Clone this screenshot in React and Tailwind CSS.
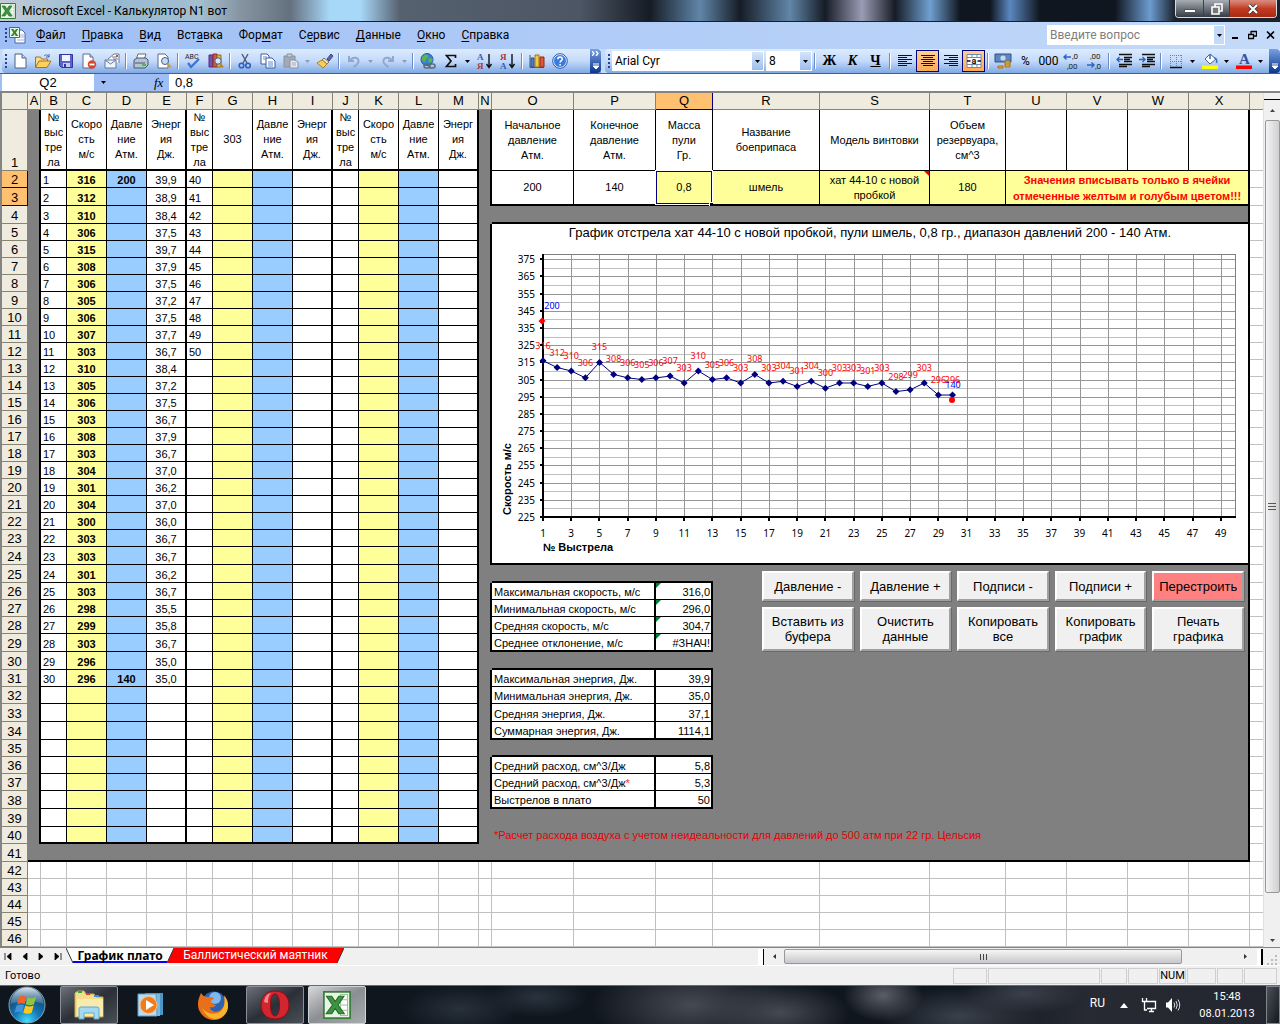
import { Fragment } from 'react';

/* ── Sheet data ── */
const COLUMNS = [
  ['A', 'w-[13px]'], ['B', 'w-[26px]'], ['C', 'w-[40px]'], ['D', 'w-[40px]'], ['E', 'w-[40px]'],
  ['F', 'w-[26px]'], ['G', 'w-[40px]'], ['H', 'w-[40px]'], ['I', 'w-[40px]'], ['J', 'w-[26px]'],
  ['K', 'w-[40px]'], ['L', 'w-[40px]'], ['M', 'w-[40px]'], ['N', 'w-[13px]'], ['O', 'w-[82px]'],
  ['P', 'w-[82px]'], ['Q', 'w-[57px]'], ['R', 'w-[107px]'], ['S', 'w-[110px]'], ['T', 'w-[76px]'],
  ['U', 'w-[61px]'], ['V', 'w-[61px]'], ['W', 'w-[61px]'], ['X', 'w-[61px]'],
];

const SPEEDS = [
  316, 312, 310, 306, 315, 308, 306, 305, 306, 307, 303, 310, 305, 306, 303,
  308, 303, 304, 301, 304, 300, 303, 303, 301, 303, 298, 299, 303, 296, 296,
];

const ENERGIES = [
  '39,9', '38,9', '38,4', '37,5', '39,7', '37,9', '37,5', '37,2', '37,5', '37,7',
  '36,7', '38,4', '37,2', '37,5', '36,7', '37,9', '36,7', '37,0', '36,2', '37,0',
  '36,0', '36,7', '36,7', '36,2', '36,7', '35,5', '35,8', '36,7', '35,0', '35,0',
];

const TALL_ROWS = [3, 4, 24, 25, 29, 30, 33, 34, 38, 39, 41];
const ROWS = Array.from({ length: 46 }, (_, i) => i + 1);

const LEFT_HEADERS = [
  ['№', 'выс', 'тре', 'ла'], ['Скоро', 'сть', 'м/с'], ['Давле', 'ние', 'Атм.'], ['Энерг', 'ия', 'Дж.'],
  ['№', 'выс', 'тре', 'ла'], ['303'], ['Давле', 'ние', 'Атм.'], ['Энерг', 'ия', 'Дж.'],
  ['№', 'выс', 'тре', 'ла'], ['Скоро', 'сть', 'м/с'], ['Давле', 'ние', 'Атм.'], ['Энерг', 'ия', 'Дж.'],
];

const RIGHT_HEADERS = [
  ['Начальное', 'давление', 'Атм.'], ['Конечное', 'давление', 'Атм.'], ['Масса', 'пули', 'Гр.'],
  ['Название', 'боеприпаса'], ['Модель винтовки'], ['Объем', 'резервуара,', 'см^3'], [], [], [], [],
];

const SUMMARY = {
  26: ['Максимальная скорость, м/с', '316,0'],
  27: ['Минимальная скорость, м/с', '296,0'],
  28: ['Средняя скорость, м/с', '304,7'],
  29: ['Среднее отклонение, м/с', '#ЗНАЧ!'],
  31: ['Максимальная энергия, Дж.', '39,9'],
  32: ['Минимальная энергия, Дж.', '35,0'],
  33: ['Средняя энергия, Дж.', '37,1'],
  34: ['Суммарная энергия, Дж.', '1114,1'],
  36: ['Средний расход, см^3/Дж', '5,8'],
  37: ['Средний расход, см^3/Дж', '5,3'],
  38: ['Выстрелов в плато', '50'],
};

const MENU = [
  ['', 'Ф', 'айл'], ['', 'П', 'равка'], ['', 'В', 'ид'], ['Вст', 'а', 'вка'], ['Фор', 'м', 'ат'],
  ['С', 'е', 'рвис'], ['', 'Д', 'анные'], ['', 'О', 'кно'], ['', 'С', 'правка'],
];

/* ── Toolbar icons ── */
const ICONS = {
  new: <><path d="M3 1h7l4 4v10H3z" fill="#fff" stroke="#4d6185" /><path d="M10 1v4h4" fill="#c9d8f0" stroke="#4d6185" /></>,
  open: <><path d="M0.500 14V4h5l1 2h6v3" fill="#fbdc85" stroke="#a0752a" /><path d="M0.500 14.500L4 8h12l-4 6.500z" fill="#ffcf5c" stroke="#a0752a" /><path d="M9 3c2-2 4-1 5 1m0-3v3h-3" fill="none" stroke="#3f66a8" /></>,
  save: <><path d="M1.500 1.500h13v13h-11l-2-2z" fill="#5c63c8" stroke="#31379a" /><path d="M4 2h8v6H4z" fill="#f0f3ff" /><path d="M5 10h7v4H5z" fill="#c7cdf1" /><path d="M6 11h2v3H6z" fill="#31379a" /></>,
  permission: <><path d="M2 1h7l3 3v11H2z" fill="#fff" stroke="#5b6d8e" /><path d="M9 1v3h3" fill="#c9d8f0" stroke="#5b6d8e" /><circle cx="11" cy="11.500" r="4.200" fill="#d9452b" /><path d="M8.500 11.500h5" stroke="#fff" strokeWidth="1.800" /></>,
  mail: <><path d="M4 6l6-5h5v9" fill="#fff" stroke="#66799a" /><path d="M1 7h11v8H1z" fill="#eef2fa" stroke="#66799a" /><path d="M1 7l5.500 4L12 7M8 4h5M9 6h5" fill="none" stroke="#66799a" /><path d="M12 2h2v2h-2z" fill="#cf513b" /></>,
  print: <><path d="M5 1h8l-2 6H3z" fill="#fff" stroke="#5e6f86" /><path d="M1 7l3-2h9l2 2v5l-3 3H1z" fill="#b6c3d4" stroke="#4b596e" /><path d="M2 10h10" stroke="#4b596e" /><path d="M9 11h4v2H9z" fill="#42c243" /></>,
  preview: <><path d="M2 1h7l3 3v11H2z" fill="#fff" stroke="#5b6d8e" /><circle cx="9" cy="8" r="3.500" fill="#bfe0f5" stroke="#4b5f85" /><path d="M11.500 10.500L15 14.500" stroke="#d2a03c" strokeWidth="2.200" /></>,
  spell: <><text x="0" y="6" fontSize="7" fill="#222">ABC</text><path d="M3 10l3 4 8-8" fill="none" stroke="#3b72d6" strokeWidth="2.200" /></>,
  research: <><path d="M1 2h4v12H1z" fill="#7a4fb0" stroke="#4a3080" /><path d="M5 1h4v13H5z" fill="#d0584a" stroke="#8a2f22" /><path d="M9 2h4v12H9z" fill="#e6b74a" stroke="#8f6c1f" /><circle cx="10" cy="8" r="3.200" fill="#d5eafa" stroke="#48597a" /><path d="M12 10.500l3 4" stroke="#b98623" strokeWidth="2" /></>,
  cut: <><path d="M5 1l5 9M11 1L6 10" stroke="#50607c" strokeWidth="1.500" /><circle cx="4.500" cy="12.500" r="2.300" fill="none" stroke="#2d5fc0" strokeWidth="1.600" /><circle cx="11" cy="12.500" r="2.300" fill="none" stroke="#2d5fc0" strokeWidth="1.600" /></>,
  copy: <><path d="M1 1h6l2 2v8H1z" fill="#fff" stroke="#3a5f9e" /><path d="M6 5h6l3 3v7H6z" fill="#fff" stroke="#3a5f9e" /><path d="M3 4h4M3 6h3M8 9h5M8 11h5M8 13h5" stroke="#5f8bd0" /></>,
  paste: <><path d="M1 3h11v11H1z" fill="#a4abb8" stroke="#8890a0" /><path d="M4 1h5v3H4z" fill="#c9ced8" stroke="#8890a0" /><path d="M7 7h5l3 2v6H7z" fill="#e4e8f0" stroke="#8890a0" /><path d="M9 10h4M9 12h4" stroke="#a4abb8" /></>,
  brush: <><path d="M10 6l4-5 2 2-4 5z" fill="#5a68b4" stroke="#3b478a" /><path d="M7 5l5 4-2 2-5-4z" fill="#e0e0e0" stroke="#8a7a40" /><path d="M5 7l5 4-4 4L0 10z" fill="#f5cf5a" stroke="#a98421" /></>,
  undo: <path d="M3 3v5h5M3.500 8c3-5 10-4 9 1-1 3-3 4-5 5" fill="none" stroke="#92a7cf" strokeWidth="2" />,
  redo: <path d="M13 3v5H8M12.500 8c-3-5-10-4-9 1 1 3 3 4 5 5" fill="none" stroke="#92a7cf" strokeWidth="2" />,
  link: <><circle cx="7" cy="6.500" r="6" fill="#3b83d8" stroke="#24599c" /><path d="M3 3c3-3 6-1 5 1S5 6 5 9c-3 0-4-4-2-6zM9 5l4 1-2 4-3-2z" fill="#5cb648" /><rect x="4" y="11" width="6" height="4" rx="2" fill="none" stroke="#5a6b7c" strokeWidth="1.500" /><rect x="9" y="11" width="6" height="4" rx="2" fill="none" stroke="#5a6b7c" strokeWidth="1.500" /></>,
  sum: <path d="M12.500 5V2.500h-9L8 8l-4.500 5.500h9V11" fill="none" stroke="#111" strokeWidth="1.700" />,
  sortAsc: <><path d="M12 1v13M9.500 11l2.500 3.500 2.500-3.500" fill="none" stroke="#111" strokeWidth="1.400" /><text x="0" y="7" fontSize="9" fontWeight="700" fill="#3a5fa8" fontFamily="Liberation Serif">А</text><text x="0" y="16" fontSize="9" fontWeight="700" fill="#a83a3a" fontFamily="Liberation Serif">Я</text></>,
  sortDesc: <><path d="M12 1v13M9.500 11l2.500 3.500 2.500-3.500" fill="none" stroke="#111" strokeWidth="1.400" /><text x="0" y="7" fontSize="9" fontWeight="700" fill="#a83a3a" fontFamily="Liberation Serif">Я</text><text x="0" y="16" fontSize="9" fontWeight="700" fill="#3a5fa8" fontFamily="Liberation Serif">А</text></>,
  chart: <><path d="M1 2v12.500h14" fill="none" stroke="#555" /><path d="M2 5h3v9H2z" fill="#4c7fd6" stroke="#284f96" /><path d="M6 2h4v12H6z" fill="#f4c83f" stroke="#9a761a" /><path d="M11 4h4v10h-4z" fill="#e0563a" stroke="#8f2a16" /></>,
  help: <><circle cx="8" cy="8" r="6.500" fill="#3a7be0" stroke="#fff" /><circle cx="8" cy="8" r="7.300" fill="none" stroke="#2a5cb0" /><path d="M5.800 6.300c0-3 4.500-3 4.500-.3 0 1.600-2.200 1.500-2.200 3.500M8.100 11v1.600" fill="none" stroke="#fff" strokeWidth="1.600" /></>,
  left: <path d="M1 2.500h14M1 4.500h9M1 6.500h14M1 8.500h9M1 10.500h14M1 12.500h9" stroke="#111" />,
  center: <path d="M1 2.500h14M3 4.500h10M1 6.500h14M3 8.500h10M1 10.500h14M3 12.500h10" stroke="#111" />,
  right: <path d="M1 2.500h14M6 4.500h9M1 6.500h14M6 8.500h9M1 10.500h14M6 12.500h9" stroke="#111" />,
  merge: <><path d="M1 1.500h14v13H1zM1 4.500h14M1 11.500h14M6 1.500v3M11 1.500v3M6 11.500v3M11 11.500v3" fill="#fff" stroke="#7288b0" /><text x="5.500" y="10.500" fontSize="9" fontWeight="700" fill="#111">a</text><path d="M1 8h3.500M15 8h-3.500" stroke="#111" strokeWidth="1.400" /></>,
  currency: <><path d="M0 1h16v8H0z" fill="#5d86bd" stroke="#2f5288" /><circle cx="8" cy="5" r="2.600" fill="#c4d8f0" /><path d="M3 13h5v2H3z" fill="#f0b43c" stroke="#a86e14" /><path d="M10 8h5v6h-5zM10 10h5M10 12h5" fill="#f6c650" stroke="#a86e14" /></>,
  incDec: <><text x="8" y="6" fontSize="8" fill="#222">,0</text><text x="3" y="16" fontSize="8" fill="#222">,00</text><path d="M7 4H0m2.500-2.500L0 4l2.500 2.500" fill="none" stroke="#2d62c4" strokeWidth="1.400" /></>,
  decDec: <><text x="3" y="6" fontSize="8" fill="#222">,00</text><text x="8" y="16" fontSize="8" fill="#222">,0</text><path d="M0 12h7M4.500 9.500L7 12l-2.500 2.500" fill="none" stroke="#2d62c4" strokeWidth="1.400" /></>,
  outdent: <><path d="M3 1.500h13M8 4.500h8M8 6.500h6M8 8.500h8M3 11.500h13M3 13.500h8" stroke="#111" strokeWidth="1.300" /><path d="M7 6.500H1m2.500-2.500L1 6.500 3.500 9" fill="none" stroke="#2d62c4" strokeWidth="1.400" /></>,
  indent: <><path d="M3 1.500h13M8 4.500h8M8 6.500h6M8 8.500h8M3 11.500h13M3 13.500h8" stroke="#111" strokeWidth="1.300" /><path d="M0 6.500h6M3.500 4L6 6.500 3.500 9" fill="none" stroke="#2d62c4" strokeWidth="1.400" /></>,
  borders: <><path d="M2 2.500h12M2 8.500h12M2.500 2v12M8.500 2v12M13.500 2v12" stroke="#6f7f9f" strokeDasharray="1 1" /><path d="M2 14.500h12" stroke="#111" strokeWidth="1.500" /></>,
  fill: <><path d="M0 12.500h16V16H0z" fill="#ff0" /><path d="M3 6l5-5 6 5-6 5z" fill="#fff" stroke="#4a5f88" /><path d="M8 1V6M12 5c3 0 3 3 2.500 5" fill="none" stroke="#3c70c0" strokeWidth="1.600" /></>,
  font: <><path d="M0 12.500h16V16H0z" fill="#f00" /><text x="3" y="11" fontSize="15" fontWeight="700" fill="#35549a" fontFamily="Liberation Serif">A</text></>,
};

const STANDARD_BAR = [
  ['new', 'Создать'], ['open', 'Открыть'], ['save', 'Сохранить'], ['permission', 'Разрешения'], ['mail', 'Сообщение'], '|',
  ['print', 'Печать'], ['preview', 'Предварительный просмотр'], '|',
  ['spell', 'Орфография'], ['research', 'Справочные материалы'], '|',
  ['cut', 'Вырезать'], ['copy', 'Копировать'], ['paste', 'Вставить', 'menu-off'], ['brush', 'Формат по образцу'], '|',
  ['undo', 'Отменить', 'menu-off'], ['redo', 'Вернуть', 'menu-off'], '|',
  ['link', 'Гиперссылка'], ['sum', 'Автосумма', 'menu'], ['sortAsc', 'По возрастанию'], ['sortDesc', 'По убыванию'], '|',
  ['chart', 'Мастер диаграмм'], ['help', 'Справка'],
];

const FORMAT_BAR = [
  ['left', 'По левому краю'], ['center', 'По центру', 'on'], ['right', 'По правому краю'], ['merge', 'Объединить', 'on'], '|',
  ['currency', 'Денежный формат'], ['%', 'Процентный формат'], ['000', 'Формат с разделителями'],
  ['incDec', 'Увеличить разрядность'], ['decDec', 'Уменьшить разрядность'], '|',
  ['outdent', 'Уменьшить отступ'], ['indent', 'Увеличить отступ'], '|',
  ['borders', 'Границы', 'menu'], ['fill', 'Цвет заливки', 'menu'], ['font', 'Цвет шрифта', 'menu'],
];

function ExcelIcon({ className }) {
  return (
    <svg viewBox="0 0 16 16" className={className}>
      <path d="M.5.5h15v15H.5z" fill="#e9f3e6" stroke="#3b7d3c" />
      <path d="M10 2h4v12h-4z" fill="#fff" stroke="#9cc49a" strokeWidth=".6" />
      <path d="M10 5h4M10 8h4M10 11h4" stroke="#9cc49a" strokeWidth=".6" />
      <path d="M2 3h3l2 3 2-3h3L8.600 8l3.600 5H9L7 10l-2 3H1.800l3.600-5z" fill="#3d9440" stroke="#226b27" strokeWidth=".6" />
    </svg>
  );
}

function WorkbookIcon() {
  return (
    <svg viewBox="0 0 17 17" className="ml-px h-[17px] w-[17px] shrink-0">
      <path d="M6 3h7l3 3v10H6z" fill="#fff" stroke="#4a66a8" />
      <path d="M11 8h4M11 10h4M8 13h7" stroke="#9cb2dc" />
      <path d="M.5.5h10v10H.5z" fill="#e9f3e6" stroke="#3b7d3c" />
      <path d="M2 2h2.500l1.200 2L7 2h2.300L6.900 5.500 9.300 9H6.800L5.500 7 4.200 9H1.800l2.500-3.500z" fill="#2f8a33" />
    </svg>
  );
}

function Caret({ className = 'text-black' }) {
  return (
    <svg viewBox="0 0 5 3" className={`h-[3px] w-[5px] shrink-0 ${className}`}>
      <path d="M0 0h5L2.500 3z" fill="currentColor" />
    </svg>
  );
}

function Grip() {
  return (
    <svg viewBox="0 0 3 15" className="h-[15px] w-[3px] shrink-0">
      <path d="M0 0h2v2H0zM0 4h2v2H0zM0 8h2v2H0zM0 12h2v2H0z" fill="#27418c" />
    </svg>
  );
}

function ToolButton({ item }) {
  if (item === '|') {
    return (
      <span className="flex w-[6px] shrink-0 justify-center">
        <span className="h-4 border-l border-r border-l-[#6a8ccb] border-r-white" />
      </span>
    );
  }
  const [name, label, mode] = item;
  return (
    <>
      <button
        type="button"
        aria-label={label}
        className={`flex h-[22px] w-[23px] shrink-0 items-center justify-center text-xs ${mode === 'on' ? 'border border-[#000080] bg-gradient-to-b from-[#ffd08f] to-[#fdab55]' : ''}`}
      >
        {ICONS[name] ? <svg viewBox="0 0 16 16" className="h-4 w-4 overflow-visible">{ICONS[name]}</svg> : name}
      </button>
      {mode && mode.startsWith('menu') && (
        <button type="button" aria-label={`${label}: список`} className="flex h-[22px] w-[11px] shrink-0 items-center justify-center">
          <Caret className={mode === 'menu' ? 'text-black' : 'text-[#8d9bb8]'} />
        </button>
      )}
    </>
  );
}

function Overflow({ more }) {
  return (
    <button type="button" aria-label="Параметры панелей" className="flex h-full w-[11px] shrink-0 flex-col items-center justify-end gap-[7px] rounded-r-sm bg-gradient-to-b from-[#7aa0e0] to-[#0a3690] pb-1">
      {more && <svg viewBox="0 0 7 5" className="h-[5px] w-[7px]"><path d="M0 0l2 2.500L0 5M4 0l2 2.500L4 5" fill="none" stroke="#fff" strokeWidth="1.400" /></svg>}
      <svg viewBox="0 0 7 6" className="h-[6px] w-[7px]"><path d="M1 1h6M1 3h6L4 6z" stroke="#fff" fill="#fff" /></svg>
    </button>
  );
}

function TitleBar() {
  return (
    <header className="flex h-[22px] items-start border-b border-[#1a1e28] bg-[linear-gradient(90deg,#c3cdd6_0px,#93b8d2_100px,#a3bfd0_200px,#8795a3_240px,#64707e_290px,#a8d8f8_330px,#a8d8f8_360px,#56616f_400px,#4c5664_580px,#161c26_650px,#6186a8_700px,#161c26_740px,#6186a8_790px,#161c26_825px,#9a9cb4_862px,#161c26_895px,#6fa0d0_930px,#10161f_960px,#10161f_990px,#5a88c0_1010px,#10161f_1040px,#10161f_1115px,#6c9cd0_1150px,#1b222c_1175px)]">
      <ExcelIcon className="mt-[3px] h-4 w-4" />
      <h1 className="ml-[6px] pt-[2px] text-xs leading-[18px] text-black">Microsoft Excel - Калькулятор N1 вот</h1>
      <div className="ml-auto mr-[3px] flex h-[18px] overflow-hidden rounded-b border border-t-0 border-[#d5dbe2]">
        <button type="button" aria-label="Свернуть" className="flex w-[28px] items-end justify-center border-r border-[#3a414c] bg-gradient-to-b from-[#a9aeb5] to-[#363c46] pb-1">
          <span className="h-1 w-3 border border-[#555] bg-white" />
        </button>
        <button type="button" aria-label="Свернуть в окно" className="flex w-[26px] items-center justify-center border-r border-[#3a414c] bg-gradient-to-b from-[#a9aeb5] to-[#363c46]">
          <svg viewBox="0 0 12 12" className="h-3 w-3"><path d="M4 1h7v7H4z" fill="none" stroke="#fff" strokeWidth="1.600" /><path d="M1 4h7v7H1z" fill="#777" stroke="#fff" strokeWidth="1.600" /></svg>
        </button>
        <button type="button" aria-label="Закрыть" className="flex w-[46px] items-center justify-center bg-gradient-to-b from-[#d98d80] via-[#c23c22] to-[#a82a12]">
          <svg viewBox="0 0 12 10" className="h-[10px] w-3"><path d="M2 1l8 8M10 1L2 9" stroke="#333" strokeWidth="3.600" /><path d="M2 1l8 8M10 1L2 9" stroke="#fff" strokeWidth="2.200" /></svg>
        </button>
      </div>
    </header>
  );
}

function MenuBar() {
  return (
    <nav className="flex h-[27px] items-center bg-gradient-to-r from-[#9ebef5] to-[#c4daf9] px-[5px] pb-px">
      <Grip />
      <WorkbookIcon />
      <div className="ml-[10px] flex gap-4 text-xs leading-4">
        {MENU.map(([before, key, after]) => (
          <button key={before + key + after} type="button">{before}<u className="underline-offset-2">{key}</u>{after}</button>
        ))}
      </div>
      <div className="ml-auto flex h-5 w-[178px] border border-white bg-white">
        <input aria-label="Введите вопрос" placeholder="Введите вопрос" className="min-w-0 flex-1 px-[2px] text-xs placeholder:text-[#808080]" />
        <button type="button" aria-label="Список вопросов" className="flex w-[10px] items-center justify-center bg-[#c4daf9]"><Caret /></button>
      </div>
      <div className="ml-[6px] flex items-center gap-[9px]">
        <button type="button" aria-label="Свернуть книгу"><svg viewBox="0 0 8 10" className="h-[10px] w-2"><path d="M1 8h6" stroke="#000" strokeWidth="2" /></svg></button>
        <button type="button" aria-label="Восстановить книгу"><svg viewBox="0 0 9 10" className="h-[10px] w-[9px]"><path d="M3 1.500h5.500V6M3 1v3M.5 4.500h5v4h-5zM6 6h3" fill="none" stroke="#000" strokeWidth="1.300" /></svg></button>
        <button type="button" aria-label="Закрыть книгу"><svg viewBox="0 0 9 10" className="h-[10px] w-[9px]"><path d="M1 1.500l7 7M8 1.500l-7 7" stroke="#000" strokeWidth="1.600" /></svg></button>
      </div>
    </nav>
  );
}

function ComboBox({ label, value, className }) {
  return (
    <div className={`relative h-5 shrink-0 border border-white bg-white ${className}`}>
      <select aria-label={label} defaultValue={value} className="block h-[18px] w-full appearance-none px-[2px] py-0 text-xs leading-[18px]">
        <option>{value}</option>
      </select>
      <span className="pointer-events-none absolute inset-y-0 right-0 flex w-[11px] items-center justify-center bg-gradient-to-b from-[#d5e5fb] to-[#9dbdec]"><Caret /></span>
    </div>
  );
}

function Toolbars() {
  const bar = 'flex h-full items-center rounded-l-sm bg-gradient-to-b from-[#ddecfe] via-[#c3dafa] to-[#81a9e2]';
  const letter = "h-[22px] w-[23px] shrink-0 text-sm font-bold [font-family:'Liberation_Serif',serif]";
  return (
    <div className="flex h-[25px] gap-1 overflow-hidden border-b border-[#3b619c] bg-[#c4daf9] pl-[2px]">
      <div role="toolbar" aria-label="Стандартная" className={`${bar} w-[599px] shrink-0 pl-[3px]`}>
        <Grip />
        {STANDARD_BAR.map((item, i) => <ToolButton key={i} item={item} />)}
        <span className="flex-1" />
        <Overflow more />
      </div>
      <div role="toolbar" aria-label="Форматирование" className={`${bar} min-w-0 flex-1 pl-[3px]`}>
        <Grip />
        <ComboBox label="Шрифт" value="Arial Cyr" className="ml-px w-[152px]" />
        <ComboBox label="Размер" value="8" className="ml-[2px] w-[46px]" />
        <ToolButton item="|" />
        <button type="button" className={letter}>Ж</button>
        <button type="button" className={`${letter} italic`}>К</button>
        <button type="button" className={`${letter} underline`}>Ч</button>
        {FORMAT_BAR.map((item, i) => (i === 0
          ? <Fragment key={i}><ToolButton item="|" /><ToolButton item={item} /></Fragment>
          : <ToolButton key={i} item={item} />))}
        <span className="flex-1" />
        <Overflow />
      </div>
    </div>
  );
}

function FormulaBar() {
  return (
    <div className="flex h-[17px] bg-[#9ebef5] pl-[2px] text-[13px] leading-4 [font-family:'Liberation_Sans',sans-serif]">
      <input aria-label="Имя ячейки" defaultValue="Q2" className="w-[92px] bg-white text-center" />
      <button type="button" aria-label="Список имён" className="flex w-[18px] items-center justify-center"><Caret /></button>
      <button type="button" className="ml-[42px] w-[15px] text-left text-[13px] leading-4 italic [font-family:'Liberation_Serif',serif]">fx</button>
      <input aria-label="Строка формул" defaultValue="0,8" className="min-w-0 flex-1 bg-white px-[6px]" />
    </div>
  );
}

/* ── Speed chart ── */
const shotX = (n) => 51 + (n - 1) * 14.12;
const speedY = (v) => 293 - (v - 225) * 1.718;

function SpeedChart() {
  const minor = Array.from({ length: 15 }, (_, i) => 230 + i * 10);
  const major = Array.from({ length: 16 }, (_, i) => 225 + i * 10);
  const shots = Array.from({ length: 25 }, (_, i) => 1 + i * 2);
  return (
    <svg viewBox="0 0 756 339" className="mx-auto block h-[339px] w-[756px] [font-family:'Liberation_Sans',sans-serif]" fontSize="11">
      <text x="378" y="13" fontSize="13" textAnchor="middle">График отстрела хат 44-10 с новой пробкой, пули шмель, 0,8 гр., диапазон давлений 200 - 140 Атм.</text>
      <g shapeRendering="crispEdges">
        {minor.map((v) => <path key={v} d={`M51 ${Math.round(speedY(v))}H743`} stroke="#c0c0c0" />)}
        {major.map((v) => <path key={v} d={`M51 ${Math.round(speedY(v))}H743`} stroke="#969696" />)}
        {shots.map((n) => <path key={n} d={`M${Math.round(shotX(n))} 30V293`} stroke="#969696" />)}
        <path d="M51 30.500H743.500V293" fill="none" stroke="#808080" />
        <path d="M51 30V294M50 293H744" stroke="#000" strokeWidth="2" />
        {major.map((v) => <path key={v} d={`M48 ${Math.round(speedY(v))}h3`} stroke="#000" strokeWidth="2" />)}
        {shots.map((n) => <path key={n} d={`M${Math.round(shotX(n))} 293v4`} stroke="#000" strokeWidth="2" />)}
      </g>
      <g className="[font-family:'Noto_Sans',sans-serif]" fontSize="10">
        {major.map((v) => <text key={v} x="43" y={speedY(v) + 4} textAnchor="end">{v}</text>)}
        {shots.map((n) => <text key={n} x={shotX(n)} y="313" textAnchor="middle">{n}</text>)}
      </g>
      <text x="51" y="327" fontWeight="700">№ Выстрела</text>
      <text transform="translate(19 291) rotate(-90)" fontWeight="700">Скорость м/с</text>
      <polyline points={SPEEDS.map((v, i) => `${shotX(i + 1)},${speedY(v)}`).join(' ')} fill="none" stroke="#000080" />
      {SPEEDS.map((v, i) => (
        <path key={i} d={`M${shotX(i + 1)} ${speedY(v) - 3.5}l3.500 3.500-3.500 3.500-3.500-3.500z`} fill="#000080" />
      ))}
      <path d="M50 93.500l3.500 3.500-3.500 3.500-3.500-3.500z" fill="#f00" />
      <circle cx="460" cy="176" r="3" fill="#f00" />
      <g className="[font-family:'Noto_Sans',sans-serif]" fontSize="9" textAnchor="middle">
        {SPEEDS.map((v, i) => <text key={i} x={shotX(i + 1)} y={speedY(v) - 12} fill="#f00">{v}</text>)}
        <text x="60" y="85" fill="#00f">200</text>
        <text x="461" y="164" fill="#00f">140</text>
      </g>
    </svg>
  );
}

function MacroButton({ children, danger }) {
  return (
    <button
      type="button"
      className={`border-2 border-t-white border-l-white border-r-[#a0a0a0] border-b-[#a0a0a0] text-[13px] leading-[15px] shadow-[1px_1px_0_#696969] ${danger ? 'bg-[#ff8080]' : 'bg-[#f0f0f0]'}`}
    >
      {children}
    </button>
  );
}

function MacroButtons() {
  return (
    <div className="flex h-full flex-col gap-[6px] pt-[6px] pr-1 pl-[49px]">
      <div className="grid h-[30px] grid-cols-5 gap-[6px]">
        <MacroButton>Давление -</MacroButton>
        <MacroButton>Давление +</MacroButton>
        <MacroButton>Подписи -</MacroButton>
        <MacroButton>Подписи +</MacroButton>
        <MacroButton danger>Перестроить</MacroButton>
      </div>
      <div className="grid h-[44px] grid-cols-5 gap-[6px]">
        <MacroButton>Вставить из<br />буфера</MacroButton>
        <MacroButton>Очистить<br />данные</MacroButton>
        <MacroButton>Копировать<br />все</MacroButton>
        <MacroButton>Копировать<br />график</MacroButton>
        <MacroButton>Печать<br />графика</MacroButton>
      </div>
    </div>
  );
}

/* ── Worksheet ── */
function HeaderCell({ lines, className }) {
  return (
    <td className={`border-black align-middle ${className}`}>
      <div className="flex h-[59px] flex-col items-center justify-center leading-[15px] whitespace-nowrap">
        {lines.map((line) => <span key={line}>{line}</span>)}
      </div>
    </td>
  );
}

function ShotCells({ row }) {
  const i = row - 2;
  const bottom = row === 40 ? 'border-b-2' : 'border-b';
  const pressure = row === 2 ? '200' : row === 31 ? '140' : '';
  const thin = `border-black border-r ${bottom}`;
  const thick = `border-black border-r-2 ${bottom}`;
  return (
    <>
      <td className={`bg-white pl-[2px] ${thin}`}>{i < 30 ? i + 1 : ''}</td>
      <td className={`bg-[#ffff99] text-center font-bold ${thin}`}>{SPEEDS[i]}</td>
      <td className={`bg-[#99ccff] text-center font-bold ${thin}`}>{pressure}</td>
      <td className={`bg-white text-center ${thick}`}>{ENERGIES[i]}</td>
      <td className={`bg-white pl-[2px] ${thin}`}>{i < 11 ? i + 40 : ''}</td>
      <td className={`bg-[#ffff99] ${thin}`} />
      <td className={`bg-[#99ccff] ${thin}`} />
      <td className={`bg-white ${thick}`} />
      <td className={`bg-white ${thin}`} />
      <td className={`bg-[#ffff99] ${thin}`} />
      <td className={`bg-[#99ccff] ${thin}`} />
      <td className={`bg-white ${thick}`} />
    </>
  );
}

function ParameterCells() {
  const cell = 'relative border-r border-b-2 border-black text-center align-middle leading-[15px]';
  return (
    <>
      <td rowSpan={2} className={`bg-white ${cell}`}>200</td>
      <td rowSpan={2} className={`bg-white ${cell}`}>140</td>
      <td rowSpan={2} className={`bg-[#ffff99] ${cell}`}>
        0,8
        <span className="absolute inset-0 border border-[#000080] outline-1 outline-white" />
        <span className="absolute -right-px -bottom-[2px] h-1 w-1 border-t border-l border-white bg-black" />
      </td>
      <td rowSpan={2} className={`bg-[#ffff99] ${cell}`}>шмель</td>
      <td rowSpan={2} className={`bg-[#ffff99] ${cell}`}>
        хат 44-10 с новой<br />пробкой
        <span className="absolute top-0 right-0 h-[5px] w-[5px] bg-red-600 [clip-path:polygon(0_0,100%_0,100%_100%)]" />
      </td>
      <td rowSpan={2} className={`bg-[#ffff99] ${cell}`}>180</td>
      <td rowSpan={2} colSpan={4} className="border-r-2 border-b-2 border-black bg-[#ffff99] text-center align-middle text-[11px] leading-4 font-bold whitespace-nowrap text-[#ff0000]">
        Значения вписывать только в ячейки<br />отмеченные желтым и голубым цветом!!!
      </td>
    </>
  );
}

function SummaryCells({ row }) {
  const last = row === 29 || row === 34 || row === 38;
  const line = last ? 'border-b-2' : 'border-b';
  const [label, value] = SUMMARY[row];
  return (
    <>
      <td colSpan={2} className={`border-r-2 border-black bg-white pl-[2px] whitespace-nowrap ${line}`}>
        {label}{row === 37 && <span className="text-red-500">*</span>}
      </td>
      <td className={`relative border-r-2 border-black bg-white pr-px text-right ${line}`}>
        {row < 30 && <span className="absolute top-0 left-0 h-[5px] w-[5px] bg-green-700 [clip-path:polygon(0_0,100%_0,0_100%)]" />}
        {value}
      </td>
    </>
  );
}

function RightCells({ row }) {
  if (row === 1) {
    return RIGHT_HEADERS.map((lines, i) => (
      <HeaderCell key={i} lines={lines} className={i === 9 ? 'border-r-2 border-b bg-white' : 'border-r border-b bg-white'} />
    ));
  }
  if (row === 2) return <ParameterCells />;
  if (row === 4) return <td colSpan={10} className="border-r-2 border-b-2 border-black" />;
  if (row === 5) return <td rowSpan={20} colSpan={10} className="border-r-2 border-b-2 border-black bg-white"><SpeedChart /></td>;
  if (row === 40) {
    return (
      <td colSpan={10} className="border-r-2 border-black pb-[2px] pl-[2px] text-[#e60000]">
        *Расчет расхода воздуха с учетом неидеальности для давлений до 500 атм при 22 гр. Цельсия
      </td>
    );
  }
  if (row < 25) return null;
  return (
    <>
      {SUMMARY[row] ? <SummaryCells row={row} /> : <td colSpan={3} className={row === 39 ? '' : 'border-b-2 border-black'} />}
      {row === 25 && <td rowSpan={15} colSpan={7} className="border-r-2 border-black align-top"><MacroButtons /></td>}
    </>
  );
}

function SheetRow({ row }) {
  const height = row === 1 ? 'h-[61px]' : TALL_ROWS.includes(row) ? 'h-[18px]' : 'h-[17px]';
  const active = row === 2 || row === 3;
  const boxed = row < 4 || (row > 4 && row < 25) || SUMMARY[row];
  return (
    <tr className={`align-bottom leading-[14px] ${row < 42 ? 'bg-[#808080]' : 'bg-white'} ${height}`}>
      <th scope="row" className={`border-r border-b text-[13px] font-normal ${active ? 'border-[#000080] bg-[#ffc06f]' : 'border-[#848471] bg-[#efebde]'}`}>{row}</th>
      {row < 41 && (
        <>
          <td className="border-r-2 border-black" />
          {row === 1
            ? LEFT_HEADERS.map((lines, i) => (
              <HeaderCell key={i} lines={lines} className={i % 4 === 3 ? 'border-r-2 border-b-2 bg-white' : 'border-r border-b-2 bg-white'} />
            ))
            : <ShotCells row={row} />}
          <td className={boxed ? 'border-r-2 border-black' : ''} />
          <RightCells row={row} />
        </>
      )}
      {row === 41 && <td colSpan={24} className="border-r-2 border-b-2 border-black" />}
      {row > 41 && COLUMNS.map(([name]) => <td key={name} className="border-r border-b border-[#c0c0c0]" />)}
      <td className="border-b border-[#c0c0c0] bg-white" />
    </tr>
  );
}

function Sheet() {
  return (
    <main className="flex border-t-2 border-l-2 border-[#848484] bg-white">
      <div className="min-w-0 flex-1 overflow-hidden">
        <table className="w-full table-fixed border-separate border-spacing-0 text-[11px] [font-family:'Liberation_Sans',sans-serif]">
          <colgroup>
            <col className="w-[26px]" />
            {COLUMNS.map(([name, width]) => <col key={name} className={width} />)}
            <col />
          </colgroup>
          <thead>
            <tr className="h-[17px] bg-[#efebde] text-[13px] leading-4">
              <td className="border-r border-b border-[#848471]" />
              {COLUMNS.map(([name]) => (
                <th key={name} scope="col" className={`border-r border-b font-normal ${name === 'Q' ? 'border-[#000080] bg-[#ffc06f]' : 'border-[#848471]'}`}>{name}</th>
              ))}
              <td className="border-b border-[#848471]" />
            </tr>
          </thead>
          <tbody>
            {ROWS.map((row) => <SheetRow key={row} row={row} />)}
          </tbody>
        </table>
      </div>
      <div className="flex w-[17px] shrink-0 flex-col items-center border-l border-[#e0e0e0] bg-[#f0f0f0]">
        <span className="h-[7px] w-full border-b border-black bg-[#f0f0f0]" />
        <span className="flex h-5 items-center"><Caret className="rotate-180 text-[#444]" /></span>
        <div className="flex h-[773px] w-[15px] flex-col items-center justify-center gap-[2px] rounded-xs border border-[#989898] bg-gradient-to-r from-[#f4f4f4] to-[#cfcfd2]">
          <span className="h-px w-2 bg-[#555]" /><span className="h-px w-2 bg-[#555]" /><span className="h-px w-2 bg-[#555]" />
        </div>
        <span className="mt-auto flex h-[14px] items-center"><Caret className="text-[#444]" /></span>
      </div>
    </main>
  );
}

const NAV_ARROWS = [
  ['Первый лист', 'M1 0v7M7 0v7L3 3.500z'], ['Предыдущий лист', 'M6 0v7L2 3.500z'],
  ['Следующий лист', 'M2 0v7l4-3.500z'], ['Последний лист', 'M1 0v7l4-3.500zM7 0v7'],
];

function SheetTabs() {
  return (
    <div className="flex h-[18px] border-t border-[#848484] bg-[#f0f0f0]">
      <div className="flex w-[66px] shrink-0 items-center justify-around">
        {NAV_ARROWS.map(([label, d]) => (
          <button key={label} type="button" aria-label={label}><svg viewBox="0 0 8 7" className="h-[7px] w-2"><path d={d} fill="#000" stroke="#000" strokeWidth=".8" /></svg></button>
        ))}
      </div>
      <div className="flex h-[15px] text-xs leading-[15px] whitespace-nowrap">
        <button type="button" className="flex font-bold [font-family:'Noto_Sans',sans-serif]">
          <svg viewBox="0 0 7 15" className="h-[15px] w-[7px]"><path d="M0 0h7v15z" fill="#fff" /><path d="M0 0l7 15" stroke="#333" /></svg>
          <span className="h-[15px] w-[94px] border-b-2 border-[#0000ff] bg-white text-center leading-[15px]">График плато</span>
          <svg viewBox="0 0 7 15" className="h-[15px] w-[7px]"><path d="M0 0h7L0 15z" fill="#fff" /><path d="M7 0v15H0z" fill="#f00" /><path d="M7 0L0 15" stroke="#333" /></svg>
        </button>
        <button type="button" className="flex text-white">
          <span className="w-[163px] bg-[#ff0000] text-center">Баллистический маятник</span>
          <svg viewBox="0 0 7 15" className="h-[15px] w-[7px]"><path d="M0 0h7L0 15z" fill="#f00" /><path d="M7 0L0 15" stroke="#333" /></svg>
        </button>
      </div>
      <div className="ml-auto flex w-[522px] items-center">
        <span className="h-4 w-[6px] border-r border-black bg-white" />
        <span className="flex w-[20px] justify-center"><Caret className="rotate-90 text-[#333]" /></span>
        <div className="flex h-[15px] w-[398px] items-center justify-center gap-[2px] rounded-xs border border-[#989898] bg-gradient-to-b from-[#f6f6f6] to-[#c8c8cc]">
          <span className="h-[6px] w-px bg-[#444]" /><span className="h-[6px] w-px bg-[#444]" /><span className="h-[6px] w-px bg-[#444]" />
        </div>
        <span className="ml-auto flex w-[14px]"><Caret className="-rotate-90 text-[#333]" /></span>
        <span className="h-4 w-[6px] border-r-2 border-black bg-white" />
        <svg viewBox="0 0 17 17" className="h-[17px] w-[17px]">
          <path d="M12 7h2v2h-2zM8 11h2v2H8zM12 11h2v2h-2zM4 15h2v2H4zM8 15h2v2H8zM12 15h2v2h-2z" fill="#bcbcbc" />
        </svg>
      </div>
    </div>
  );
}

function StatusBar() {
  const box = 'h-4 border border-[#cfcfcf]';
  return (
    <footer className="flex h-5 items-center border-t border-white bg-[#f0f0f0] pr-[3px] pl-[5px] text-[11px] leading-4">
      <span>Готово</span>
      <div className="ml-auto flex gap-px">
        <span className={`${box} w-[34px]`} />
        <span className={`${box} w-[112px]`} />
        <span className={`${box} w-[26px]`} />
        <span className={`${box} w-[30px]`} />
        <span className={`${box} flex w-[27px] items-center justify-center`}>NUM</span>
        <span className={`${box} w-[29px]`} />
        <span className={`${box} w-[26px]`} />
        <span className={`${box} w-[33px]`} />
      </div>
    </footer>
  );
}

/* ── Windows taskbar ── */
function StartOrb() {
  return (
    <svg viewBox="0 0 38 38" className="h-[38px] w-[38px]">
      <defs>
        <radialGradient id="orb" cx=".5" cy=".95" r=".9"><stop offset="0" stopColor="#3fe0ff" /><stop offset=".4" stopColor="#1577b8" /><stop offset="1" stopColor="#12395e" /></radialGradient>
        <linearGradient id="gloss" x1="0" y1="0" x2="0" y2="1"><stop offset="0" stopColor="#dbe8f0" /><stop offset="1" stopColor="#5d8aa8" stopOpacity=".5" /></linearGradient>
      </defs>
      <circle cx="19" cy="19" r="18" fill="url(#orb)" stroke="#86a5b8" />
      <path d="M2.500 18a16.500 16.500 0 0133 0c-9-4-24-4-33 0z" fill="url(#gloss)" />
      <path d="M11 11c3-2 5-1 7.500 0l-2 7c-3-1-5-1-7.500.3z" fill="#f0622a" />
      <path d="M19.500 11.500c3 1 5.500 1 8.500-.5l-2 7.300c-3 1.300-5.500 1.200-8.300 0z" fill="#8ec63f" />
      <path d="M8.500 19.500c3-1.500 5-1.300 7.600-.3l-2 7.300c-3-1-5-1-7.600.3z" fill="#3f93d8" />
      <path d="M17.300 19.600c3 1.200 5.500 1.200 8.400 0l-2 7.200c-3 1.500-5.600 1.200-8.400 0z" fill="#fcc820" />
    </svg>
  );
}

function Taskbar() {
  const item = 'flex h-[38px] w-[58px] items-center justify-center rounded-xs';
  const open = 'border border-[#8b9097] bg-gradient-to-br from-[#6d727a] via-[#2b3038] to-[#4a4f56]';
  return (
    <footer className="mt-auto flex h-[39px] items-center border-t border-[#5a6c84] bg-[#10161e] bg-[radial-gradient(60px_24px_at_36%_60%,#27303b,transparent),radial-gradient(50px_20px_at_42%_30%,#2a333e,transparent),radial-gradient(100px_44px_at_54%_50%,#454a52,transparent),radial-gradient(70px_30px_at_61%_70%,#454a52,transparent),radial-gradient(40px_26px_at_69%_25%,#5a5f67,transparent),radial-gradient(80px_30px_at_75%_80%,#3b414b,transparent),radial-gradient(60px_20px_at_80%_20%,#3b414b,transparent),linear-gradient(90deg,#10161e_0,#10161e_75%,#272a33_85%,#24262f_100%)] text-white">
      <button type="button" aria-label="Пуск" className="ml-2"><StartOrb /></button>
      <div className="ml-[14px] flex items-center gap-1">
        <button type="button" aria-label="Проводник" className={`${item} ${open}`}>
          <svg viewBox="0 0 32 30" className="h-[30px] w-8">
            <path d="M2 3l3-2h6l2 3h8l2 3h7v20H2z" fill="#f3dc8a" stroke="#c9a94e" />
            <path d="M5 1h4v2H5z" fill="#2fa83a" /><path d="M13 3h4v2h-4z" fill="#d8402c" /><path d="M21 5h5v2h-5z" fill="#3a8ed8" />
            <path d="M4 9h26v17H4z" fill="#f9ebae" />
            <path d="M6 29V19q0-2 2-2h16q2 0 2 2v10h-5v-6H11v6z" fill="#a5d9f0" stroke="#5fa9d0" />
          </svg>
        </button>
        <button type="button" aria-label="Проигрыватель" className={item}>
          <svg viewBox="0 0 28 28" className="h-7 w-7">
            <path d="M8 2h18v22H8z" fill="#4d95c8" /><path d="M5 3h18v22H5z" fill="#79b9e0" /><path d="M1 3h18l1 22H1z" fill="#b7dcf1" stroke="#5f9cc4" />
            <circle cx="11.500" cy="14" r="8.500" fill="#f07c1e" stroke="#fbc08a" /><path d="M9 9l8 5-8 5z" fill="#fff" />
          </svg>
        </button>
        <button type="button" aria-label="Firefox" className={item}>
          <svg viewBox="0 0 32 32" className="h-8 w-8">
            <circle cx="17" cy="15" r="12.500" fill="#2d62b0" /><circle cx="18" cy="9" r="6" fill="#7fb8ea" />
            <path d="M4 4c-3 6-4 12-2 17 3 7 9 10 15 10 8 0 14-7 14-14 0-4-1-8-4-11 2 7 0 14-5 16-4 2-9 0-9-4 2 1 5 0 6-2-2 0-4-1-5-3 0-2 2-2 3-4-2-1-4-1-6-1-3 0-5-1-7-4z" fill="#e8701a" />
            <path d="M27 7c2 8-1 15-6 17-6 2-12 0-16-5 3 7 8 11 13 11 8 0 13-7 13-13 0-4-1-7-4-10z" fill="#f8b52a" />
          </svg>
        </button>
        <button type="button" aria-label="Opera" className={`${item} ${open}`}>
          <svg viewBox="0 0 30 30" className="h-[30px] w-[30px]">
            <path fillRule="evenodd" d="M15 1C6 1 1 7 1 15s5 14 14 14 14-6 14-14S24 1 15 1zm0 3c3 0 4.500 5 4.500 11S18 26 15 26s-4.500-5-4.500-11S12 4 15 4z" fill="#d32530" stroke="#8a0d15" />
            <path d="M4 12C5 5 9 3 11 3 8 6 8 10 8 13z" fill="#f08a8c" />
          </svg>
        </button>
        <button type="button" aria-label="Microsoft Excel" className={`${item} border border-[#d0d3d6] bg-gradient-to-br from-[#d5d7d9] via-[#8b8e92] to-[#a9acae]`}>
          <ExcelIcon className="h-7 w-7" />
        </button>
      </div>
      <div className="ml-auto flex h-full items-center">
        <span className="mr-[15px] pb-1 text-xs">RU</span>
        <button type="button" aria-label="Отображать скрытые значки"><svg viewBox="0 0 8 5" className="h-[5px] w-2"><path d="M4 0l4 5H0z" fill="#fff" /></svg></button>
        <svg viewBox="0 0 16 16" className="ml-[13px] h-4 w-4"><path d="M5 4.500h9.500v7H6M8 14.500h5M10.500 12v2M1.500 1v3.500h4V1M3.500 5v8H6" fill="none" stroke="#fff" strokeWidth="1.300" /></svg>
        <svg viewBox="0 0 16 16" className="ml-2 h-4 w-4"><path d="M1 5.500h2L7 1v14l-4-4.500H1z" fill="#fff" /><path d="M9 5.500q1.500 2.500 0 5M11 4q2.500 4 0 8M13 2.500q3.500 5.500 0 11" fill="none" stroke="#ddd" /></svg>
        <time className="ml-[18px] w-[56px] text-center text-[11px] leading-[17px]">15:48<br />08.01.2013</time>
        <button type="button" aria-label="Показать рабочий стол" className="ml-[11px] h-[38px] w-[14px] border border-[#7f858d] bg-gradient-to-br from-[#4c525b] to-[#15181e]" />
      </div>
    </footer>
  );
}

export default function App() {
  return (
    <div className="flex min-h-screen flex-col overflow-hidden bg-[#f0f0f0] text-black [font-family:Roboto,'Noto_Sans',sans-serif]">
      <TitleBar />
      <MenuBar />
      <Toolbars />
      <FormulaBar />
      <Sheet />
      <SheetTabs />
      <StatusBar />
      <Taskbar />
    </div>
  );
}
